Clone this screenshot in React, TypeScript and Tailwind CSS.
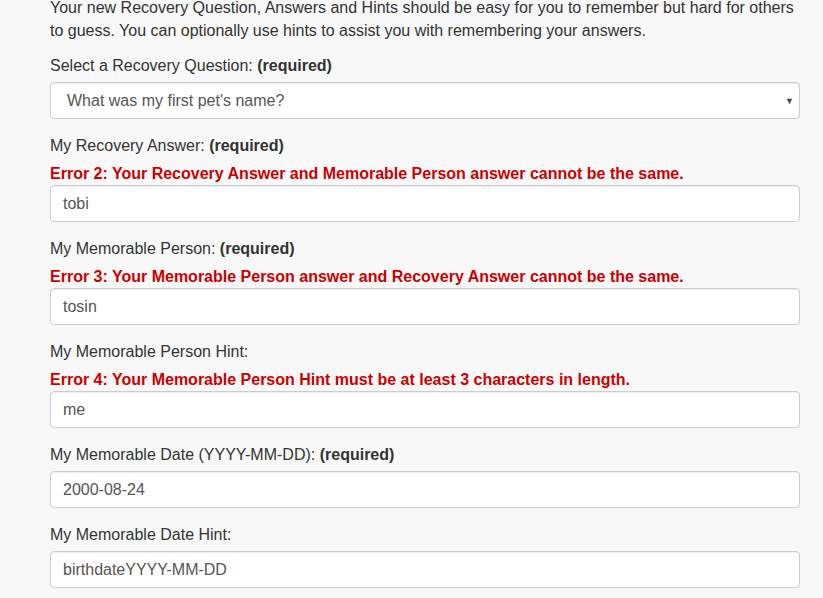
import * as React from "react";

const label = "block text-[16px] leading-[22px] text-[#333]";
const req = "font-bold";
const err = "block text-[16px] leading-[22px] font-bold text-[#cc0000]";
const input =
  "block w-full h-[37px] px-3 text-[16px] text-[#555] bg-white border border-[#ccc] rounded-[4px] shadow-[inset_0_1px_1px_rgba(0,0,0,0.075)] outline-none";

export default function App() {
  return (
    <div
      className="min-h-[598px] bg-[#f8f8f8] pl-[50px] pr-[23px] overflow-hidden"
      style={{ fontFamily: '"Liberation Sans", Arial, sans-serif' }}
    >
      <p className="text-[16px] leading-[23px] text-[#333] -mt-[4px]">
        Your new Recovery Question, Answers and Hints should be easy for you to remember but hard for others
        to guess. You can optionally use hints to assist you with remembering your answers.
      </p>

      <div className="mt-[13px]">
        <span className={label}>
          Select a Recovery Question: <span className={req}>(required)</span>
        </span>
        <div className="relative mt-[5px]">
          <div className={input + " flex items-center pl-[16px]"}>What was my first pet's name?</div>
          <span className="absolute right-[6px] top-[13px] text-[9px] text-[#444]">▼</span>
        </div>
      </div>

      <div className="mt-[16px]">
        <span className={label}>
          My Recovery Answer: <span className={req}>(required)</span>
        </span>
        <span className={err + " mt-[6px]"}>
          Error 2: Your Recovery Answer and Memorable Person answer cannot be the same.
        </span>
        <input
          readOnly
          value="tobi"
          className={
            input +
            " border-[#66afe9] shadow-[inset_0_1px_1px_rgba(0,0,0,0.075),0_0_6px_rgba(102,175,233,0.6)]"
          }
        />
      </div>

      <div className="mt-[16px]">
        <span className={label}>
          My Memorable Person: <span className={req}>(required)</span>
        </span>
        <span className={err + " mt-[6px]"}>
          Error 3: Your Memorable Person answer and Recovery Answer cannot be the same.
        </span>
        <input readOnly value="tosin" className={input} />
      </div>

      <div className="mt-[16px]">
        <span className={label}>My Memorable Person Hint:</span>
        <span className={err + " mt-[6px]"}>
          Error 4: Your Memorable Person Hint must be at least 3 characters in length.
        </span>
        <input readOnly value="me" className={input} />
      </div>

      <div className="mt-[16px]">
        <span className={label}>
          My Memorable Date (YYYY-MM-DD): <span className={req}>(required)</span>
        </span>
        <input readOnly value="2000-08-24" className={input + " mt-[5px]"} />
      </div>

      <div className="mt-[16px]">
        <span className={label}>My Memorable Date Hint:</span>
        <input readOnly value="birthdateYYYY-MM-DD" className={input + " mt-[5px]"} />
      </div>
    </div>
  );
}
